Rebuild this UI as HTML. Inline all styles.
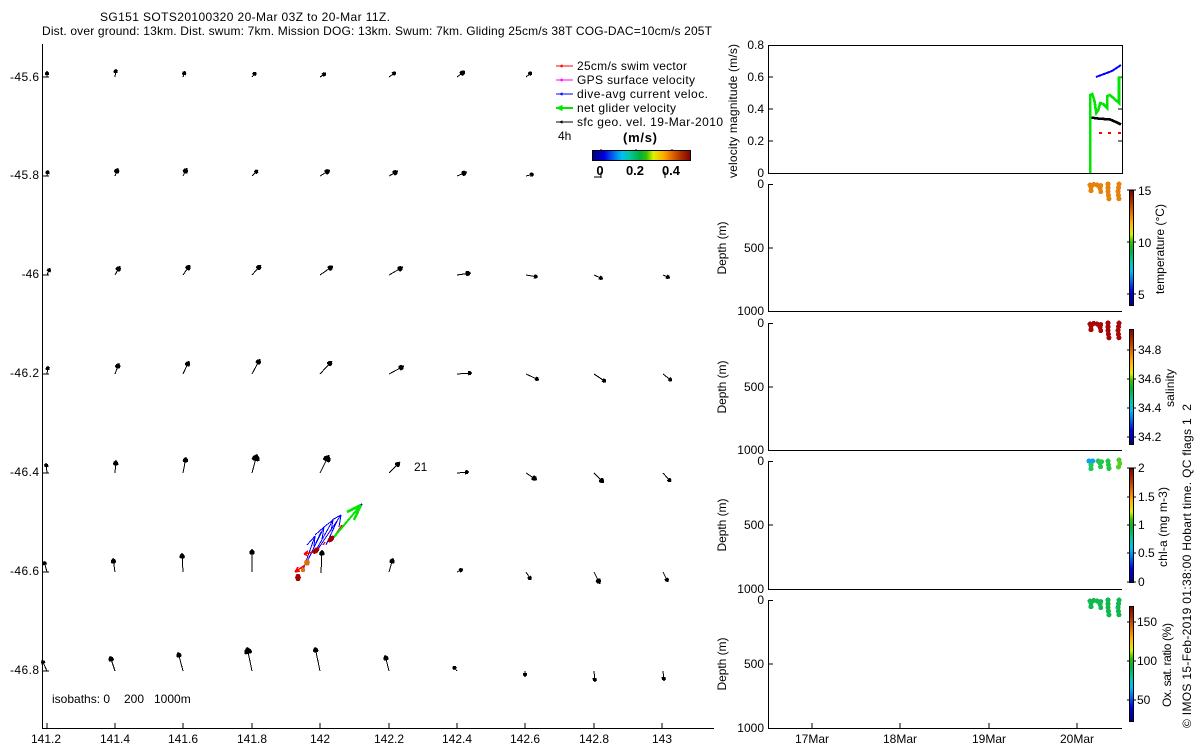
<!DOCTYPE html>
<html>
<head>
<meta charset="utf-8">
<style>
html,body{margin:0;padding:0;background:#fff;width:1200px;height:750px;overflow:hidden}
svg{display:block}
text{font-family:"Liberation Sans",Arial,sans-serif;font-size:12px;fill:#000}
.e{text-anchor:end}.m{text-anchor:middle}.b{font-weight:bold;font-size:13px}
.ax{stroke:#000;stroke-width:1;fill:none;shape-rendering:crispEdges}
.as path{fill:none;stroke:#000;stroke-width:1}
.s{marker-end:url(#hs)}.d{marker-end:url(#hm)}.l{marker-end:url(#hl)}
</style>
</head>
<body>
<svg width="1200" height="750" viewBox="0 0 1200 750" xmlns="http://www.w3.org/2000/svg" shape-rendering="crispEdges">
<defs>
<marker id="hs" markerUnits="userSpaceOnUse" markerWidth="10" markerHeight="10" refX="5" refY="5" orient="auto" overflow="visible"><path d="M5 5L3.5 3L1 3L1 7L3.5 7Z" fill="#000"/></marker>
<marker id="hm" markerUnits="userSpaceOnUse" markerWidth="12" markerHeight="12" refX="6" refY="6" orient="auto" overflow="visible"><path d="M6 6L4 3.7L1.5 3.3L0.5 4.5L0.5 7.5L1.5 8.7L4 8.3Z" fill="#000"/></marker>
<marker id="hl" markerUnits="userSpaceOnUse" markerWidth="14" markerHeight="14" refX="7" refY="7" orient="auto" overflow="visible"><path d="M7 7L4 3.6L1 3L0 4.5L0 9.5L1 11L4 10.4Z" fill="#000"/></marker>
<linearGradient id="jh" x1="0" x2="1" y1="0" y2="0">
<stop offset="0" stop-color="#000080"/><stop offset=".12" stop-color="#0000e0"/><stop offset=".22" stop-color="#0070f0"/><stop offset=".3" stop-color="#00c0f0"/><stop offset=".38" stop-color="#00c8a0"/><stop offset=".48" stop-color="#00b040"/><stop offset=".55" stop-color="#30c000"/><stop offset=".62" stop-color="#e0f000"/><stop offset=".72" stop-color="#ffb000"/><stop offset=".8" stop-color="#e87000"/><stop offset=".9" stop-color="#b03000"/><stop offset="1" stop-color="#800000"/>
</linearGradient>
<linearGradient id="jv" x1="0" x2="0" y1="1" y2="0">
<stop offset="0" stop-color="#000080"/><stop offset=".12" stop-color="#0000e0"/><stop offset=".22" stop-color="#0070f0"/><stop offset=".3" stop-color="#00c0f0"/><stop offset=".38" stop-color="#00c8a0"/><stop offset=".48" stop-color="#00b040"/><stop offset=".55" stop-color="#30c000"/><stop offset=".62" stop-color="#e0f000"/><stop offset=".72" stop-color="#ffb000"/><stop offset=".8" stop-color="#e87000"/><stop offset=".9" stop-color="#b03000"/><stop offset="1" stop-color="#800000"/>
</linearGradient>
<g id="t" fill="none" stroke-width="5" stroke-linecap="round" stroke-linejoin="round" stroke-dasharray="0.1 3.6">
<path d="M1090 185L1097 184M1091 187L1091 193"/>
<path d="M1097 185L1103 186M1100 188L1101 193L1103 194"/>
<path d="M1108 184L1108 192L1109 200"/>
<path d="M1119 184L1118 192L1119 200"/>
</g>
</defs>

<!-- titles -->
<text x="100" y="21" textLength="290" lengthAdjust="spacing">SG151 SOTS20100320 20-Mar 03Z to 20-Mar 11Z.</text>
<text x="42" y="35" textLength="670" lengthAdjust="spacing">Dist. over ground: 13km. Dist. swum: 7km. Mission DOG: 13km. Swum: 7km. Gliding 25cm/s 38T COG-DAC=10cm/s 205T</text>

<!-- main axes -->
<path class="ax" d="M42.5 44V728.5H714M42 77H49M42 176H49M42 275H49M42 374H49M42 473H49M42 572H49M42 671H49M47 728V723M115 728V723M183 728V723M252 728V723M320 728V723M389 728V723M457 728V723M525 728V723M594 728V723M662 728V723"/>
<g>
<text class="e" x="39" y="81" textLength="29">-45.6</text>
<text class="e" x="39" y="179" textLength="29">-45.8</text>
<text class="e" x="39" y="278">-46</text>
<text class="e" x="39" y="377" textLength="29">-46.2</text>
<text class="e" x="39" y="476" textLength="29">-46.4</text>
<text class="e" x="39" y="575" textLength="29">-46.6</text>
<text class="e" x="39" y="674" textLength="29">-46.8</text>
<text class="m" x="46" y="743">141.2</text>
<text class="m" x="115" y="743">141.4</text>
<text class="m" x="183" y="743">141.6</text>
<text class="m" x="252" y="743">141.8</text>
<text class="m" x="320" y="743">142</text>
<text class="m" x="389" y="743">142.2</text>
<text class="m" x="457" y="743">142.4</text>
<text class="m" x="525" y="743">142.6</text>
<text class="m" x="594" y="743">142.8</text>
<text class="m" x="662" y="743">143</text>
<text x="414" y="471">21</text>
<text x="52" y="703">isobaths: 0</text>
<text x="124" y="703">200</text>
<text x="154" y="703">1000m</text>
</g>

<!-- current arrows -->
<g class="as">
<path class="s" d="M47 77L47 71"/><path class="s" d="M115 77L116 69"/><path class="s" d="M183 77L185 71"/><path class="s" d="M252 77L256 72"/><path class="s" d="M320 77L326 73"/><path class="s" d="M389 77L396 72"/><path class="d" d="M457 77L465 71"/><path class="s" d="M526 77L532 72"/>
<path class="s" d="M47 176L48 170"/><path class="d" d="M115 176L118 168"/><path class="d" d="M183 176L187 168"/><path class="s" d="M252 176L258 170"/><path class="d" d="M320 176L330 170"/><path class="d" d="M389 176L398 171"/><path class="d" d="M457 176L467 172"/><path class="s" d="M526 176L534 174"/>
<path class="s" d="M47 275L50 268"/><path class="d" d="M115 275L120 266"/><path class="d" d="M183 275L190 265"/><path class="d" d="M252 275L261 265"/><path class="d" d="M320 275L333 266"/><path class="d" d="M389 275L403 267"/><path class="d" d="M457 275L471 273"/><path class="s" d="M526 275L538 277"/><path class="s" d="M594 275L603 279"/><path class="s" d="M663 275L670 278"/>
<path class="s" d="M47 374L48 366"/><path class="d" d="M115 374L119 363"/><path class="d" d="M183 374L189 361"/><path class="d" d="M252 374L260 359"/><path class="d" d="M320 374L332 361"/><path class="d" d="M389 374L404 366"/><path class="s" d="M457 374L472 373"/><path class="s" d="M526 374L539 380"/><path class="s" d="M594 374L606 382"/><path class="s" d="M663 374L672 381"/>
<path class="s" d="M47 473L46 463"/><path class="d" d="M115 473L116 460"/><path class="d" d="M183 473L186 457"/><path class="l" d="M252 473L257 454"/><path class="l" d="M320 473L329 455"/><path class="d" d="M389 473L400 462"/><path class="s" d="M457 473L469 472"/><path class="d" d="M526 473L537 480"/><path class="d" d="M594 473L604 483"/><path class="s" d="M663 473L671 482"/>
<path class="s" d="M47 572L44 561"/><path class="d" d="M115 572L113 558"/><path class="d" d="M183 572L182 553"/><path class="d" d="M252 572L252 549"/><path class="d" d="M321 573L322 550"/><path class="d" d="M389 572L393 558"/><path class="s" d="M457 572L463 569"/><path class="s" d="M526 572L531 580"/><path class="d" d="M594 572L600 584"/><path class="s" d="M663 572L668 582"/>
<path class="s" d="M47 671L42 660"/><path class="d" d="M115 671L110 656"/><path class="d" d="M183 671L178 652"/><path class="l" d="M252 671L247 647"/><path class="d" d="M320 671L315 647"/><path class="d" d="M389 671L385 655"/><path class="s" d="M457 671L453 666"/><path class="s" d="M525 671L525 677"/><path class="s" d="M594 671L595 682"/><path class="s" d="M663 671L664 681"/>
</g>

<!-- glider track -->
<g fill="none">
<g stroke="#0000ff" stroke-width="1">
<path d="M303 570L315 536M315 536L307 545M315 536L314 546"/>
<path d="M307 562L324 527M324 527L315 535M324 527L322 539"/>
<path d="M315 552L333 520M333 520L324 527M333 520L331 531"/>
<path d="M318 549L341 515M341 515L332 520M341 515L339 527"/>
<path d="M310 556L321 532M326 545L338 519"/>
</g>
<g stroke="#ff0000" stroke-width="1.5">
<path d="M305 565L295 572M295 572L298 567M295 572L300 571"/>
<path d="M313 552L304 554M304 554L308 551M304 554L308 556"/>
<path d="M325 542L323 545"/>
<path d="M334 537L342 525"/>
</g>
<g stroke="#00e600" stroke-width="2">
<path d="M334 537L361 505"/>
<path d="M361 505L347 512M361 505L354 520" stroke-width="2.5"/>
</g>
<path d="M361 505L362 504" stroke="#0000ff" stroke-width="2"/>
</g>
<g stroke="none">
<ellipse cx="298" cy="577.5" rx="2.8" ry="3.8" fill="#a00000"/>
<ellipse cx="303" cy="570" rx="2.2" ry="2.2" fill="#e07010"/>
<ellipse cx="307" cy="562.5" rx="2.8" ry="3.2" fill="#d87010"/>
<ellipse cx="316" cy="550.5" rx="4" ry="2.5" fill="#a00000" transform="rotate(-45 316 550.5)"/>
<ellipse cx="331" cy="539" rx="4" ry="2.5" fill="#a00000" transform="rotate(-45 331 539)"/>
</g>

<!-- legend -->
<g fill="none" stroke-width="1">
<path d="M556 66H573" stroke="#ff0000"/><path d="M560 66L562 65V67Z" fill="#ff0000" stroke="#ff0000"/>
<path d="M556 80H573" stroke="#ff00ff"/><path d="M560 80L562 79V81Z" fill="#ff00ff" stroke="#ff00ff"/>
<path d="M556 94H573" stroke="#0000ff"/><path d="M560 94L562 93V95Z" fill="#0000ff" stroke="#0000ff"/>
<path d="M556 108H573" stroke="#00e600" stroke-width="2"/><path d="M557 108L562 105.5V110.5Z" fill="#00e600" stroke="#00e600"/>
<path d="M556 122H573" stroke="#000"/><path d="M560 122L562 121V123Z" fill="#000" stroke="#000"/>
</g>
<text x="577" y="70" textLength="110">25cm/s swim vector</text>
<text x="577" y="84" textLength="118">GPS surface velocity</text>
<text x="577" y="98" textLength="131">dive-avg current veloc.</text>
<text x="577" y="112" textLength="99">net glider velocity</text>
<text x="577" y="126" textLength="146">sfc geo. vel. 19-Mar-2010</text>
<text x="558" y="140">4h</text>
<text class="b" x="623" y="142" textLength="34">(m/s)</text>
<path class="ax" d="M601 149V150M636 149V150M672 149V150"/>
<rect x="592.5" y="150.5" width="98" height="10" fill="url(#jh)" stroke="#000"/>
<text class="b m" x="600" y="175">0</text><text class="b m" x="635" y="175">0.2</text><text class="b m" x="671" y="175">0.4</text>
<path class="ax" d="M594 177H601M601 172V178M665 172V178"/>

<!-- panels -->
<path class="ax" d="M768.5 45.5H1122.5V173.5H768.5ZM768 77H773M768 109H773M768 141H773M1122 77H1118M1122 109H1118M1122 141H1118"/>
<path class="ax" d="M773 184.5H768.5V311.5H1122M768 248H773"/>
<path class="ax" d="M773 323.5H768.5V450.5H1122M768 387H773"/>
<path class="ax" d="M773 461.5H768.5V589.5H1122M768 525H773"/>
<path class="ax" d="M773 600.5H768.5V728.5H1122M768 664H773M812 728V723M900 728V723M989 728V723M1077 728V723"/>

<!-- left labels -->
<g>
<text class="e" x="764" y="49">0.8</text><text class="e" x="764" y="81">0.6</text><text class="e" x="764" y="113">0.4</text><text class="e" x="764" y="145">0.2</text><text class="e" x="764" y="177">0</text>
<text class="e" x="764" y="188">0</text><text class="e" x="764" y="252">500</text><text class="e" x="764" y="315">1000</text>
<text class="e" x="764" y="327">0</text><text class="e" x="764" y="391">500</text><text class="e" x="764" y="454">1000</text>
<text class="e" x="764" y="465">0</text><text class="e" x="764" y="529">500</text><text class="e" x="764" y="593">1000</text>
<text class="e" x="764" y="604">0</text><text class="e" x="764" y="668">500</text><text class="e" x="764" y="732">1000</text>
<text class="m" x="812" y="743">17Mar</text><text class="m" x="900" y="743">18Mar</text><text class="m" x="989" y="743">19Mar</text><text class="m" x="1077" y="743">20Mar</text>
<text class="m" transform="translate(737 111) rotate(-90)" textLength="134">velocity magnitude (m/s)</text>
<text class="m" transform="translate(726 248) rotate(-90)" textLength="53">Depth (m)</text>
<text class="m" transform="translate(726 387) rotate(-90)" textLength="53">Depth (m)</text>
<text class="m" transform="translate(726 525) rotate(-90)" textLength="53">Depth (m)</text>
<text class="m" transform="translate(726 664) rotate(-90)" textLength="53">Depth (m)</text>
</g>

<!-- panel 1 data -->
<g fill="none">
<path d="M1096 77L1104 74L1112 71L1118 67L1121 65" stroke="#0000ff" stroke-width="2"/>
<path d="M1090.5 117.5L1098 118.5L1110 119.5L1116 122L1121 124.5" stroke="#000" stroke-width="2.6"/>
<path d="M1090.3 173V95L1092.3 94L1094.3 100L1096.3 113L1098.3 110L1100.3 103L1103.3 104L1107.3 108V96L1110 95L1119 103V78L1121 77" stroke="#00e600" stroke-width="2.6"/>
</g>
<path d="M1099 133H1102M1108 133H1111M1118 133H1121" stroke="#ff0000" stroke-width="2" fill="none"/>

<!-- depth tracks -->
<g>
<use href="#t" stroke="#e8800c"/>
<use href="#t" stroke="#a80808" transform="translate(0 139)"/>
<use href="#t" stroke="#10b850" transform="translate(0 416)"/>
<g fill="none" stroke-width="5" stroke-linecap="round" stroke-dasharray="0.1 3.6">
<path d="M1089 461L1096 461" stroke="#10a0f0"/>
<path d="M1091 465L1091 470" stroke="#20c860"/>
<path d="M1098 461L1103 462M1100 463L1101 469" stroke="#20c850"/>
<path d="M1108 461L1109 469" stroke="#20c840"/>
<path d="M1119 460L1120 463L1118 468" stroke="#50d020"/>
</g>
</g>

<!-- colorbars -->
<path class="ax" d="M1127 190H1136M1127 242H1136M1127 294H1136M1127 350H1136M1127 379H1136M1127 408H1136M1127 437H1136M1127 468H1136M1127 497H1136M1127 525H1136M1127 553H1136M1127 582H1136M1127 622H1136M1127 661H1136M1127 700H1136"/>
<rect x="1129.5" y="190.5" width="4" height="115" fill="url(#jv)" stroke="#000"/>
<rect x="1129.5" y="329.5" width="4" height="115" fill="url(#jv)" stroke="#000"/>
<rect x="1129.5" y="468.5" width="4" height="114" fill="url(#jv)" stroke="#000"/>
<rect x="1129.5" y="606.5" width="4" height="115" fill="url(#jv)" stroke="#000"/>
<g>
<text x="1138" y="195">15</text><text x="1138" y="247">10</text><text x="1138" y="299">5</text>
<text x="1138" y="354">34.8</text><text x="1138" y="383">34.6</text><text x="1138" y="412">34.4</text><text x="1138" y="441">34.2</text>
<text x="1138" y="472">2</text><text x="1138" y="501">1.5</text><text x="1138" y="529">1</text><text x="1138" y="557">0.5</text><text x="1138" y="586">0</text>
<text x="1137" y="626">150</text><text x="1137" y="665">100</text><text x="1137" y="704">50</text>
<text class="m" transform="translate(1164 249) rotate(-90)" textLength="90">temperature (°C)</text>
<text class="m" transform="translate(1174 388) rotate(-90)" textLength="38">salinity</text>
<text class="m" transform="translate(1167 527) rotate(-90)" textLength="80">chl-a (mg m-3)</text>
<text class="m" transform="translate(1171 665) rotate(-90)" textLength="84">Ox. sat. ratio (%)</text>
<text transform="translate(1191 728) rotate(-90)" textLength="324">© IMOS 15-Feb-2019 01:38:00 Hobart time. QC flags 1&#160;&#160;2</text>
</g>
</svg>
</body>
</html>
